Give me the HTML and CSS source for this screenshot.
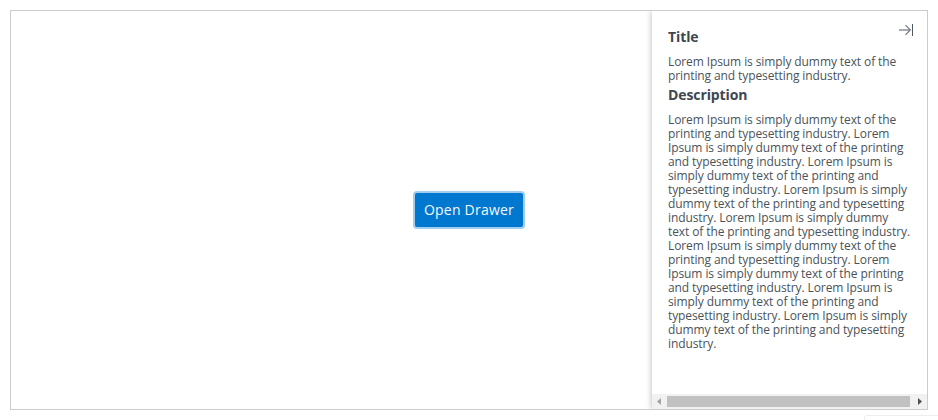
FILE: index.html
```html
<!DOCTYPE html>
<html lang="en">
<head>
<meta charset="utf-8">
<title>Drawer</title>
<link rel="stylesheet" href="styles.css">
</head>
<body>
<main class="container">
  <button class="open-button" type="button">Open Drawer</button>
  <aside class="drawer">
    <div class="content">
      <h2>Title</h2>
      <p>Lorem Ipsum is simply dummy text of the<br>printing and typesetting industry.</p>
      <h2>Description</h2>
      <p>Lorem Ipsum is simply dummy text of the<br>printing and typesetting industry. Lorem<br>Ipsum is simply dummy text of the printing<br>and typesetting industry. Lorem Ipsum is<br>simply dummy text of the printing and<br>typesetting industry. Lorem Ipsum is simply<br>dummy text of the printing and typesetting<br>industry. Lorem Ipsum is simply dummy<br>text of the printing and typesetting industry.<br>Lorem Ipsum is simply dummy text of the<br>printing and typesetting industry. Lorem<br>Ipsum is simply dummy text of the printing<br>and typesetting industry. Lorem Ipsum is<br>simply dummy text of the printing and<br>typesetting industry. Lorem Ipsum is simply<br>dummy text of the printing and typesetting<br>industry.</p>
    </div>
    <svg class="close" width="16" height="14" viewBox="0 0 16 14" fill="none">
      <path d="M1 7H12" stroke="#5d666e" stroke-width="1.1"/>
      <path d="M7.5 2.2L12.3 7L7.5 11.8" stroke="#6d767d" stroke-width="1.1"/>
      <path d="M14.5 1V13" stroke="#50575f"/>
    </svg>
    <div class="scrollbar">
      <svg width="15" height="15" viewBox="0 0 15 15"><path d="M9 4V11L5 7.5Z" fill="#a3a3a3"/></svg>
      <div class="thumb"></div>
      <svg width="17" height="15" viewBox="0 0 17 15"><path d="M8 4V11L12 7.5Z" fill="#505050"/></svg>
    </div>
  </aside>
</main>
<div class="corner"></div>
</body>
</html>
```

FILE: styles.css
```css
* { box-sizing: border-box; }
body {
  margin: 0;
  height: 420px;
  padding: 10px;
  overflow: hidden;
  position: relative;
  background: #fff;
  color: #3e474f;
  font-family: "Open Sans", sans-serif;
}
.container {
  position: relative;
  display: flex;
  align-items: center;
  justify-content: center;
  height: 400px;
  border: 1px solid #ccc;
  overflow: hidden;
}
.open-button {
  width: 108px;
  height: 34px;
  padding: 0;
  border: 0;
  border-radius: 2px;
  background: #0078d0;
  box-shadow: 0 0 0 2px #a3cdf0;
  color: #f4f9fd;
  font: 14px/34px "Open Sans", sans-serif;
  letter-spacing: 0.22px;
}
.drawer {
  position: absolute;
  top: 0;
  right: 0;
  bottom: 0;
  width: 275px;
  display: flex;
  flex-direction: column;
  background: #fff;
  box-shadow: 0 0 6px rgba(0, 0, 0, 0.3);
}
.content {
  flex: 1;
  padding: 16px 0 0 16px;
  white-space: nowrap;
}
h2 {
  margin: 0 0 8px;
  font-size: 14px;
  line-height: 20px;
  font-weight: 700;
  letter-spacing: -0.1px;
}
p {
  margin: 0 0 2px;
  font-size: 12px;
  line-height: 14px;
  color: #4a535a;
  letter-spacing: -0.1px;
}
.close {
  position: absolute;
  top: 12px;
  right: 13px;
}
.scrollbar {
  display: flex;
  align-items: center;
  height: 15px;
  background: #f1f1f1;
}
.thumb {
  flex: 1;
  height: 11px;
  background: #c1c1c1;
}
.corner {
  position: absolute;
  left: 864px;
  top: 415px;
  width: 84px;
  height: 20px;
  border: 1px solid #eee;
  border-radius: 3px;
}
```
